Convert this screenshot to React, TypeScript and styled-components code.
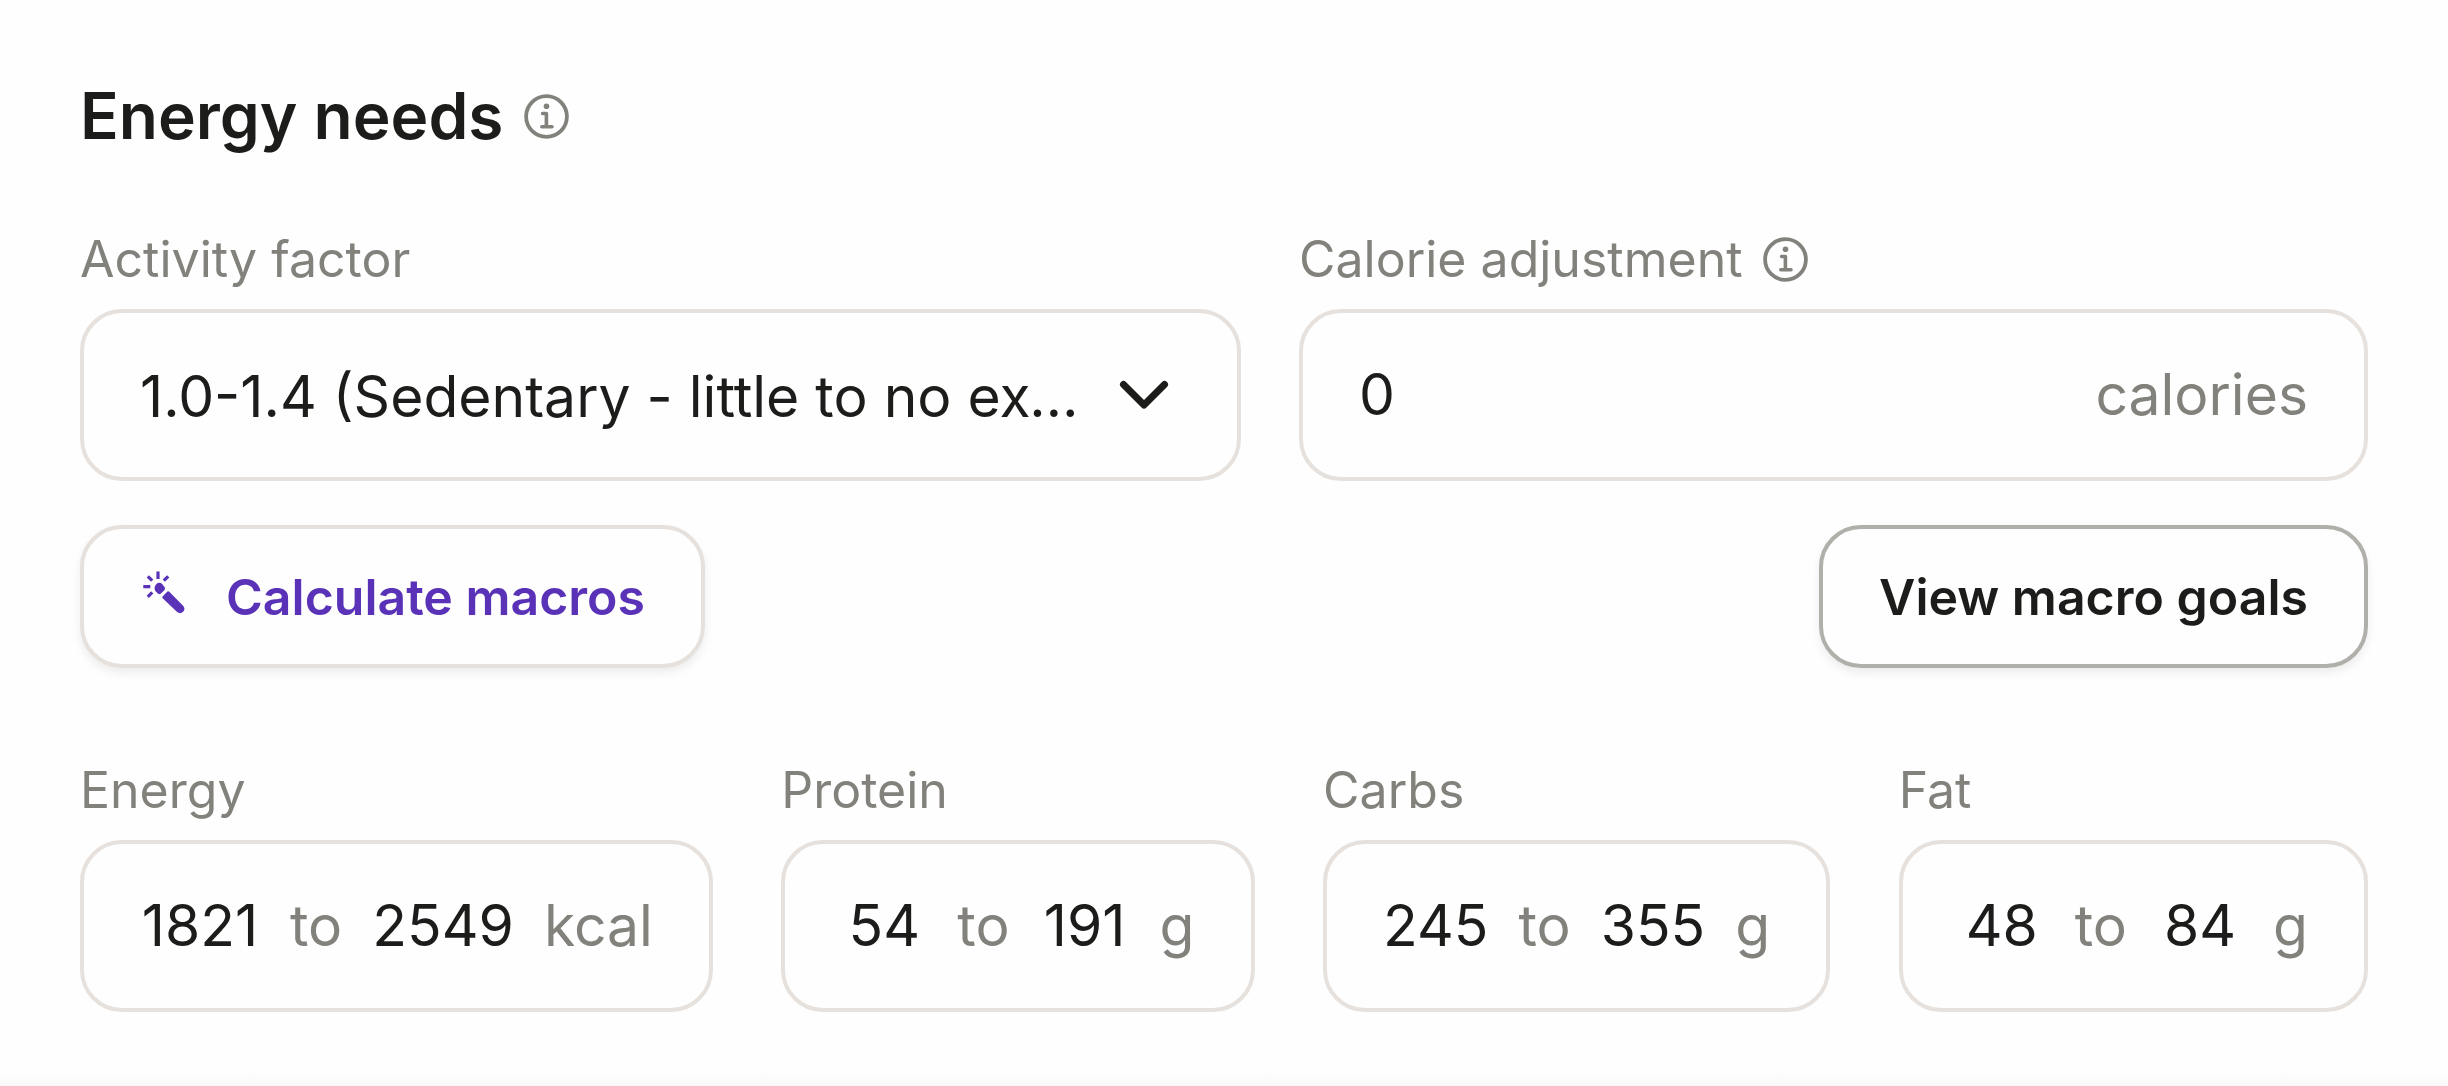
import React, { useState } from "react";
import styled, { createGlobalStyle } from "styled-components";

const ink = "#1c1c1a";
const muted = "#82817c";
const line = "#e6e1dc";
const accent = "#5932b8";

const GlobalStyle = createGlobalStyle`
  *, *::before, *::after { box-sizing: border-box; }
  body {
    margin: 0;
    background: #fefefe;
    color: ${ink};
    font-family: Inter, "Liberation Sans", sans-serif;
  }
  button, input, select { font: inherit; color: inherit; }
`;

const Panel = styled.main`
  padding: 77px 80px 60px;
  display: flex;
  flex-direction: column;
`;

const Heading = styled.header`
  display: flex;
  align-items: center;
  gap: 20px;
  margin-bottom: 74px;
`;

const Title = styled.h1`
  margin: 0;
  font-size: 64px;
  line-height: 78px;
  font-weight: 600;
`;

const InfoButton = styled.button`
  display: flex;
  padding: 0;
  border: 0;
  background: none;
  color: ${muted};
  cursor: pointer;
`;

const FactorGrid = styled.div`
  display: grid;
  grid-template-columns: minmax(0, 1162fr) minmax(0, 1070fr);
  gap: 58px;
`;

const Field = styled.div`
  display: flex;
  flex-direction: column;
  gap: 20px;
`;

const LabelRow = styled.div`
  display: flex;
  align-items: center;
  gap: 20px;
  color: ${muted};
  font-size: 50px;
  line-height: 60px;
`;

const Box = styled.div`
  display: flex;
  align-items: center;
  height: 172px;
  padding: 0 56px;
  border: 4px solid ${line};
  border-radius: 42px;
  font-size: 57px;
  line-height: 70px;
`;

const SelectBox = styled(Box)`
  display: grid;
  padding: 0;
`;

const Select = styled.select`
  grid-area: 1 / 1;
  width: 100%;
  height: 100%;
  padding: 4px 140px 0 56px;
  border: 0;
  border-radius: 38px;
  background: none;
  appearance: none;
  overflow: hidden;
  white-space: nowrap;
  text-overflow: ellipsis;
`;

const Chevron = styled.svg`
  grid-area: 1 / 1;
  justify-self: end;
  margin-right: 68px;
  pointer-events: none;
`;

const AmountInput = styled.input`
  flex: 1;
  min-width: 0;
  padding: 0;
  border: 0;
  background: none;
`;

const Unit = styled.span`
  color: ${muted};
`;

const Actions = styled.div`
  display: flex;
  justify-content: space-between;
  margin: 44px 0 92px;
`;

const Button = styled.button<{ $accent?: boolean }>`
  display: flex;
  align-items: center;
  gap: 38px;
  height: 143px;
  padding: 0 56px;
  border: 4px solid ${(p) => (p.$accent ? line : "#b1afaa")};
  border-radius: 42px;
  background: #fefefe;
  box-shadow: 0 5px 10px rgba(0, 0, 0, 0.07);
  color: ${(p) => (p.$accent ? accent : ink)};
  font-size: 50px;
  line-height: 60px;
  font-weight: 600;
  cursor: pointer;
`;

const Macros = styled.div`
  display: flex;
  justify-content: space-between;
`;

const RangeBox = styled(Box)`
  gap: 30px;
`;

const RangeInput = styled.input<{ $digits: number }>`
  field-sizing: content;
  min-width: ${(p) => Math.max(86, p.$digits * 30)}px;
  padding: 0;
  border: 0;
  background: none;
  text-align: center;
`;

const FooterShade = styled.div`
  height: 14px;
  background: linear-gradient(#fefefe, #f8f8f8);
`;

const InfoIcon = () => (
  <svg width="45" height="45" viewBox="0 0 45 45" fill="none" stroke="currentColor" aria-hidden="true">
    <circle cx="22.5" cy="22.5" r="20.4" strokeWidth="3.8" />
    <path d="M18.6 19.5H22.4V32.8M17.8 32.8H28" strokeWidth="3.6" strokeLinecap="round" strokeLinejoin="round" />
    <circle cx="22.5" cy="12.3" r="2.8" fill="currentColor" stroke="none" />
  </svg>
);

const WandIcon = () => (
  <svg width="48" height="52" viewBox="20 20 48 52" fill="none" stroke="currentColor" aria-hidden="true">
    <path
      d="M38 20.5v7.5M27.8 25.3l4.4 4.4M48.2 25.3l-4.4 4.4M23.3 35.6h7M27.8 45.8l4.4-4.4"
      strokeWidth="3.2"
    />
    <path d="M36.2 33.2q3-2.8 6.2 0l2.5 3.4q.5 1.6-.8 2.8l-3.2 3.2q-1.4 1-2.8.2l-2.6-2.6q-2.2-3.4.7-7z" fill="currentColor" stroke="none" />
    <path d="M42.6 45.4l4.8-4.8q1-.6 1.9.2l14 14.2q2.4 3.2-.2 5.8-2.8 2.6-6 .2l-14.4-13.8q-.9-.9-.1-1.8z" fill="currentColor" stroke="none" />
  </svg>
);

interface Macro {
  name: string;
  low: string;
  high: string;
  unit: string;
}

const macros: Macro[] = [
  { name: "Energy", low: "1821", high: "2549", unit: "kcal" },
  { name: "Protein", low: "54", high: "191", unit: "g" },
  { name: "Carbs", low: "245", high: "355", unit: "g" },
  { name: "Fat", low: "48", high: "84", unit: "g" },
];

const MacroRange = ({ name, low, high, unit }: Macro) => {
  const [from, setFrom] = useState(low);
  const [to, setTo] = useState(high);
  const id = name.toLowerCase();
  return (
    <Field>
      <LabelRow>
        <label htmlFor={id}>{name}</label>
      </LabelRow>
      <RangeBox>
        <RangeInput id={id} $digits={from.length} value={from} onChange={(e) => setFrom(e.target.value)} />
        <Unit>to</Unit>
        <RangeInput
          aria-label={`${name} maximum`}
          $digits={to.length}
          value={to}
          onChange={(e) => setTo(e.target.value)}
        />
        <Unit>{unit}</Unit>
      </RangeBox>
    </Field>
  );
};

export default function App() {
  const [adjustment, setAdjustment] = useState("0");
  return (
    <>
      <GlobalStyle />
      <Panel>
        <Heading>
          <Title>Energy needs</Title>
          <InfoButton type="button" aria-label="About energy needs">
            <InfoIcon />
          </InfoButton>
        </Heading>

        <FactorGrid>
          <Field>
            <LabelRow>
              <label htmlFor="activity">Activity factor</label>
            </LabelRow>
            <SelectBox>
              <Select id="activity">
                <option>1.0-1.4 (Sedentary - little to no exercise)</option>
              </Select>
              <Chevron width="50" height="30" viewBox="0 0 50 30" fill="none" aria-hidden="true">
                <path d="M4.5 4.5L25 25L45.5 4.5" stroke={ink} strokeWidth="7" strokeLinecap="round" strokeLinejoin="round" />
              </Chevron>
            </SelectBox>
          </Field>
          <Field>
            <LabelRow>
              <label htmlFor="adjustment">Calorie adjustment</label>
              <InfoButton type="button" aria-label="About calorie adjustment">
                <InfoIcon />
              </InfoButton>
            </LabelRow>
            <Box>
              <AmountInput id="adjustment" value={adjustment} onChange={(e) => setAdjustment(e.target.value)} />
              <Unit>calories</Unit>
            </Box>
          </Field>
        </FactorGrid>

        <Actions>
          <Button type="button" $accent>
            <WandIcon />
            Calculate macros
          </Button>
          <Button type="button">View macro goals</Button>
        </Actions>

        <Macros>
          {macros.map((m) => (
            <MacroRange key={m.name} {...m} />
          ))}
        </Macros>
      </Panel>
      <FooterShade />
    </>
  );
}
